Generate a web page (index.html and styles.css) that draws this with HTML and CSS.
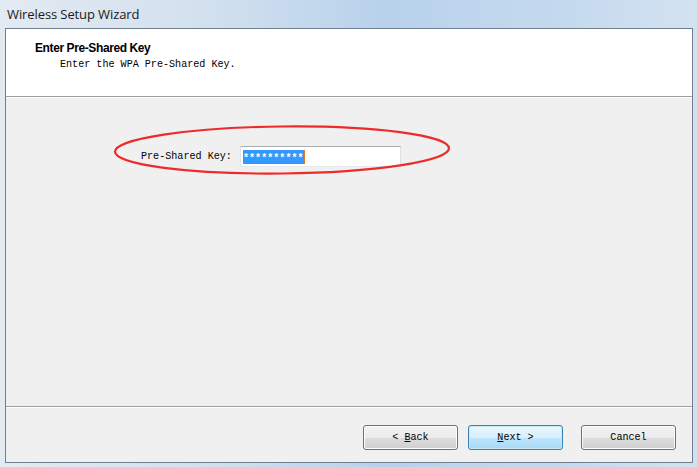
FILE: index.html
```html
<!DOCTYPE html>
<html>
<head>
<meta charset="utf-8">
<link rel="stylesheet" href="styles.css">
</head>
<body>
<div class="window">
  <div class="titlebar"><span class="title">Wireless Setup Wizard</span></div>
  <div class="frame">
    <div class="header">
      <div class="h-title">Enter Pre-Shared Key</div>
      <div class="h-sub">Enter the WPA Pre-Shared Key.</div>
    </div>
    <div class="content">
      <div class="row">
        <span class="label">Pre-Shared Key:</span>
        <div class="field"><span class="sel">**********</span><span class="caret"></span></div>
      </div>
      <svg class="circle" width="345" height="56" viewBox="0 0 345 56">
        <ellipse cx="172" cy="28" rx="167" ry="23.5" fill="none" stroke="#ee2a2a" stroke-width="2.2" transform="rotate(-0.6 172 28)"/>
      </svg>
    </div>
    <div class="footer">
      <button class="btn">&lt; <u>B</u>ack</button>
      <button class="btn def"><u>N</u>ext &gt;</button>
      <button class="btn cancel">Cancel</button>
    </div>
  </div>
</div>
</body>
</html>
```

FILE: styles.css
```css
html, body {
  margin: 0;
  padding: 0;
}
body {
  width: 697px;
  height: 467px;
  overflow: hidden;
}
.window {
  width: 697px;
  height: 467px;
  box-sizing: border-box;
  display: flex;
  flex-direction: column;
  padding: 0 4px 4px 5px;
  background: linear-gradient(90deg, #e3eaf2 0%, #d2e0ee 30%, #b8d2ec 55%, #c4d9ee 80%, #d3e2f1 100%);
}
.titlebar {
  height: 28px;
  display: flex;
  align-items: center;
  padding-left: 2px;
}
.title {
  font-family: "Open Sans", "Noto Sans", sans-serif;
  font-size: 13px;
  color: #1a1a1a;
  letter-spacing: -0.1px;
}
.frame {
  flex: 1;
  display: flex;
  flex-direction: column;
  border: 1px solid #6f7f90;
  background: #f0f0f0;
}
.header {
  height: 68px;
  background: #fff;
  border-bottom: 1px solid #a0a0a0;
  box-shadow: 0 1px 0 #fff;
  box-sizing: border-box;
  padding: 12px 0 0 29px;
}
.h-title {
  font-family: "Liberation Sans", Arial, sans-serif;
  font-weight: bold;
  font-size: 12px;
  letter-spacing: -0.4px;
  color: #000;
  line-height: 14px;
}
.h-sub {
  font-family: "Liberation Mono", monospace;
  font-size: 10.1px;
  color: #000;
  margin: 4px 0 0 25px;
  line-height: 12px;
}
.content {
  flex: 1;
  position: relative;
  border-bottom: 1px solid #a0a0a0;
  box-shadow: 0 1px 0 #fff;
  padding: 49px 0 0 135px;
  box-sizing: border-box;
}
.row {
  display: flex;
  align-items: center;
}
.label {
  font-family: "Liberation Mono", monospace;
  font-size: 10.1px;
  color: #000;
  width: 99px;
}
.field {
  width: 161px;
  height: 21px;
  box-sizing: border-box;
  background: #fff;
  border: 1px solid #abadb3;
  border-color: #abadb3 #dbdfe6 #e3e9ef #e2e3ea;
  display: flex;
  align-items: center;
  padding-left: 2px;
}
.sel {
  display: block;
  background: #3399ff;
  color: #fff;
  font-family: "Liberation Mono", monospace;
  font-size: 10.1px;
  font-weight: bold;
  box-sizing: border-box;
  height: 14px;
  padding-top: 3px;
  line-height: 11px;
}
.caret {
  width: 1px;
  height: 14px;
  background: #e07a20;
}
.circle {
  position: absolute;
  left: 104px;
  top: 25px;
}
.footer {
  height: 55px;
  display: flex;
  justify-content: flex-end;
  align-items: flex-start;
  padding: 18px 16px 0 0;
  box-sizing: border-box;
}
.btn {
  width: 95px;
  height: 25px;
  box-sizing: border-box;
  border: 1px solid #707070;
  border-radius: 3px;
  background: linear-gradient(#f2f2f2 0%, #ebebeb 50%, #dddddd 51%, #cfcfcf 100%);
  box-shadow: inset 0 0 0 1px #fcfcfc;
  font-family: "Liberation Mono", monospace;
  font-size: 10.1px;
  color: #000;
  padding: 0;
  margin-left: 10px;
}
.btn.def {
  border-color: #3c7fb1;
  background: linear-gradient(#eaf6fd 0%, #d9f0fc 50%, #bee6fd 51%, #a7d9f5 100%);
  box-shadow: inset 0 0 0 1px #c6e8fb;
}
.btn.cancel {
  margin-left: 18px;
}
```
